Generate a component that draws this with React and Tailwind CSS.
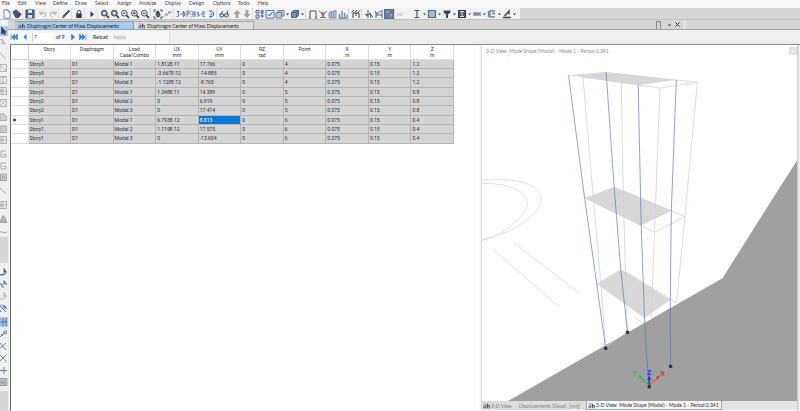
import React from "react";

const ui = "font-['Lato',sans-serif] text-[5px] leading-[8px]";

const glyphs = {
  file: <path d="M2 .8h4l2 2v6.4H2zM6 .8v2h2" fill="#f7fafd" stroke="#7288a8" />,
  paste: <path d="M1 3l3-2 5 4-2 3-3 .8zM3 3l4 4M5 6l3-1" fill="#4d6385" stroke="#2f4262" />,
  save: <g><path d="M1 1h8v8H1z" fill="#4a617f" stroke="#3b4f6d" /><path d="M3 1h4v3H3zM2.8 6h4.4v3H2.8z" fill="#d7e0ec" stroke="none" /></g>,
  undo: <path d="M2 2v3h3M2.2 4.8Q5 1.8 7.5 4.2 8.6 6.6 6 8" stroke="#a5abb5" />,
  redo: <path d="M8 2v3H5M7.8 4.8Q5 1.8 2.5 4.2 1.4 6.6 4 8" stroke="#a5abb5" />,
  pencil: <g><path d="M2.5 7.5L8.5 1.5" stroke="#34496b" strokeWidth="2" /><path d="M1.2 9l.6-2 1.4 1.4z" fill="#1f2c44" /></g>,
  lock: <g><path d="M3.2 5V3.2a1.8 1.8 0 013.6 0V5" stroke="#3d4a60" /><path d="M2.300 4.500h5.400V9H2.300z" fill="#2c3950" stroke="none" /></g>,
  play: <path d="M3.5 2.2L7 5.2 3.5 8.2z" fill="#2c4068" stroke="none" />,
  zoom: <g><circle cx="4.3" cy="4.2" r="2.9" fill="#e9eef5" stroke="#4a566c" /><path d="M6.5 6.4L9 9" stroke="#2f394d" strokeWidth="1.6" /><path d="M3 4.2h2.6" stroke="#2f394d" /></g>,
  zoomBox: <g><circle cx="4.3" cy="4.2" r="2.9" fill="#7d8ba3" stroke="#3f495d" /><path d="M6.5 6.4L9 9" stroke="#2f394d" strokeWidth="1.6" /><path d="M3 3h2.6v2.4H3z" fill="#dbe3ee" stroke="none" /></g>,
  zoomIn: <g><circle cx="4.3" cy="4.2" r="2.9" fill="#e9eef5" stroke="#4a566c" /><path d="M6.5 6.4L9 9" stroke="#2f394d" strokeWidth="1.6" /><path d="M3 4.2h2.6M4.3 2.9v2.6" stroke="#2f394d" /></g>,
  pan: <g><path d="M1 3V1h2M7 1h2v2M9 7v2H7M3 9H1V7" stroke="#44536d" /><path d="M3 5.5V3h1v1-2h1v2-1.6h1V4h1v2.5L6 8H4z" fill="#50617f" stroke="#2d3a52" strokeWidth=".5" /></g>,
  wave: <path d="M1 8L3 4l1 3 2-5 .6 3L9 2" stroke="#9da8ba" />,
  view3: <path d="M1 2.500h2L2 4.500q2 1.500 0 3H.800M4.500 5h1.600M7.200 2.500v5q2.400-.400 1.600-3Q8.400 2.500 7.200 2.500" stroke="#45608c" />,
  plan: <path d="M1 2v6M1 2h2v3H1M4.500 2.500h1M4.500 5h1M4.500 8h1M7 2v6M9 2v6M7 5h2" stroke="#5b749e" />,
  elev: <path d="M3 3Q1 3 1.500 5H3V7H1M4.500 5h1.500M7 2v6M9 3H7.500M9 5H7.500M9 7.500H7.500" stroke="#5b749e" />,
  rotate: <path d="M3 2h2.500Q8 3 7.500 6 6.500 8.500 3.500 8M3.500 8l1.500-1.500M4 5h2" stroke="#36558c" />,
  glasses: <g><circle cx="2.700" cy="6.300" r="1.900" fill="#c5d3e6" stroke="#3f5576" /><circle cx="7.300" cy="6.300" r="1.900" fill="#c5d3e6" stroke="#3f5576" /><path d="M1 5.500L4 2M9 5.500L8 1.500M4.500 6h1" stroke="#3f5576" /></g>,
  up: <path d="M5 1l3.600 4H6.400v4H3.600V5H1.400z" fill="#a4a4a4" stroke="none" />,
  down: <path d="M5 9l3.600-4H6.400V1H3.600v4H1.400z" fill="#a4a4a4" stroke="none" />,
  tree: <path d="M1 1.500h3v2.500H1zM1 6h3v3H1zM5.500 2H9M5.500 4H9M5.500 7h3.500M7 1v8" stroke="#47618b" />,
  check: <g><path d="M1 1.500h8v7.500H1z" fill="#e9f0f8" stroke="#5a7498" /><path d="M2.800 5l1.700 2 3-4" stroke="#34517f" /></g>,
  objects: <g><path d="M1 3.500h5.500V9H1zM3 3.500V1.500h6V7H6.500" fill="#b8c8dd" stroke="#6a82a8" /></g>,
  cube: <path d="M1.500 3.500L3.500 1.500h5V6L6.500 8.500h-5zM1.500 3.500h5v5M6.500 3.500l2-2" fill="#7d91b2" stroke="#4c6186" />,
  frame: <path d="M2 9V2h6v7M.8 9h2.400M6.800 9h2.400" stroke="#48566f" />,
  bent: <g><path d="M1 2l2.500 2L5 8l1.500-4L9 2M2 8.500h6" stroke="#6d7786" /><path d="M3 3.500h4L5 7.500z" fill="#cf5248" stroke="none" /></g>,
  bars: <g><path d="M1 3.500l7-2V9H1z" fill="#b9c8dc" stroke="#7790b4" /><path d="M3.300 3v6M5.700 2.500V9" stroke="#7790b4" /></g>,
  bars2: <path d="M1.500 9V5M4 9V2M6.500 9V4M9 9V5.500M.500 9h9" stroke="#6f87aa" strokeWidth="1.300" />,
  load: <path d="M2 9V4h6v5M.800 3.500l2-2.500M4 3.500l2-2.500M7 3.500l2-2M5 4v3" stroke="#2f3d54" />,
  axial: <path d="M4 1v8M1 5l3 1 2-2 1 5M2 7l5-3M7 6l2 2" stroke="#4d5b72" />,
  moment: <path d="M1 2q2 4 4 1.500T9 2M2 9V3M8 9V3M2 6h6" stroke="#4f6587" />,
  area: <g><path d="M0 0h10v10H0z" fill="#6c7f99" stroke="#4e5f78" /><path d="M2 2h3v2H2zM6 5h2v2.500H6zM2 7h2" fill="#93a4ba" stroke="none" /></g>,
  ibeam: <path d="M2.500 1.500h5M2.500 8.500h5M5 1.500v7" stroke="#4a576d" strokeWidth="1.200" />,
  box: <path d="M1.500 1.500h7v7h-7z" fill="#a6bcd8" stroke="#54688a" strokeWidth="1.200" />,
  tee: <path d="M1.500 1.500h7v2L6 5.500V9H4V5.500L1.500 3.500z" fill="#3c4759" stroke="none" />,
  ibox: <g><path d="M1.500 1.500h7v7h-7z" fill="#4c5a72" stroke="#27334a" /><path d="M3 2.500h4M3 7.500h4M5 2.500v5" stroke="#d7dfea" /></g>,
  deck: <path d="M1 4h8M1 6h8M2 5h6" stroke="#58667d" />,
  channel: <path d="M8 2H3v6h5M1.500 2v6M5 4.500h3" stroke="#6d83a6" strokeWidth="1.300" />,
  draw: <path d="M1 8.500h8M2.500 7L7 2v3.500" stroke="#33435f" strokeWidth="1.400" />,
  cursor: <path d="M3.500 1v7L5.200 6.700 6.400 9l1-.600L6.400 6.300h2z" fill="#31435f" stroke="#1f2c44" strokeWidth=".500" />,
  reshape: <path d="M1 2l4 1 2 5M4 2v5l2-1 1 2" stroke="#b4b4b4" />,
  line: <path d="M2 2l6 6" stroke="#b0b0b0" />,
  boxDiag: <path d="M2 1.500h6.500v7H2zM2 1.500l6.500 7" stroke="#b6b6b6" />,
  column: <path d="M2 1.500h6.500v7H2zM5 2v6M3.500 2.500h3M3.500 7.500h3" stroke="#b6b6b6" />,
  grid2: <path d="M2 1.500h6.500v7H2zM5 1.500v7M2 5h6.500M3.500 3v4" stroke="#b0b0b0" />,
  brace: <path d="M2 1.500h6.500v7H2zM2 1.500l6.500 7M8.500 1.500L2 8.500" stroke="#b6b6b6" />,
  poly: <path d="M2 2h4l2.500 2.500v4H2z" fill="#d3d3d3" stroke="#adadad" />,
  rect: <path d="M2 2h6.500v6.500H2z" fill="#cdcdcd" stroke="#adadad" />,
  wallC: <path d="M8 2H3v6h5V5.500H5.500" stroke="#a8a8a8" />,
  wallO: <path d="M2.500 2h6v6.500h-6zM4.500 4h2v2h-2z" fill="#cfcfcf" stroke="#a6a6a6" />,
  hill: <path d="M2 8.500L4.500 2H6l2.800 6.500z" fill="#b5b5b5" stroke="#a5a5a5" />,
  dash: <path d="M1 5.500q2-1.500 4 0t4-.500" stroke="#a8a8a8" />,
  selA: <path d="M1 8h4l3-2M6 1.500v4l1-1 1.500 1z" fill="#50688f" stroke="#50688f" />,
  selB: <path d="M1 8V5h3v3h2M6 1.500v4l1-1 1.500 1z" fill="none" stroke="#50688f" />,
  selC: <path d="M1 8h4l3-2M6 1.500v4l1-1 1.500 1z" stroke="#b0b0b0" />,
  selD: <path d="M1 2l7 7M3 1.500l2 2M6 2v3.500l1-1 1.500 1zM1 6l2 3" stroke="#50688f" />,
  snapGrid: <path d="M5 1v8M1 5h8M8 1v8M2 2v1M2 7v1" stroke="#4c76a8" />,
  snapEnd: <path d="M1 9l6-6M6 2h2.500v2.500H6zM3 5l2 2" stroke="#74849c" />,
  snapMid: <path d="M2 2l6 7M5 5l3-3M2 7l3-2" stroke="#74849c" />,
  snapX: <path d="M1.500 1.500l7 7M8.500 1.500l-7 7" stroke="#74849c" />,
  snapPerp: <path d="M1 5.500h8M6 2v7" stroke="#74849c" />,
  snapFine: <path d="M0 1.500h9v7H0zM2 4h5M2 6h5" fill="#bcbcbc" stroke="#9c9c9c" />,
  first: <path d="M2 2v6M8.500 2L5.500 5l3 3zM5.500 2L2.800 5l2.700 3z" fill="#2b7fd4" stroke="#2b7fd4" strokeWidth=".600" />,
  prev: <path d="M6.500 2L3.500 5l3 3z" fill="#2b7fd4" stroke="none" />,
  next: <path d="M3.500 2l3 3-3 3z" fill="#2b7fd4" stroke="#2b7fd4" strokeWidth=".500" />,
  last: <path d="M8 2v6M1.500 2l3 3-3 3zM4.500 2l2.700 3-2.700 3z" fill="#2b7fd4" stroke="#2b7fd4" strokeWidth=".600" />,
  app: <g><path d="M1 1h4v3H1z" fill="#e9a9a9" stroke="none" /><path d="M1.500 9V5M4 9V4M6.500 9V2.500M9 9V5M6 5h3" stroke="#33435f" strokeWidth="1.300" /></g>,
};

function Icon({ name, className = "size-[10px]" }) {
  return (
    <svg viewBox="0 0 10 10" className={`${className} shrink-0`} fill="none" strokeWidth="1" aria-hidden="true">
      {glyphs[name]}
    </svg>
  );
}

function Caret() {
  return (
    <svg viewBox="0 0 5 10" className="h-[10px] w-[5px]" aria-hidden="true">
      <path d="M1 4.500h3L2.500 6.300z" fill="#30394a" />
    </svg>
  );
}

function Tool({ name, label, drop }) {
  return (
    <>
      <button type="button" aria-label={label || name} className="flex w-[10px] items-center justify-center">
        <Icon name={name} />
      </button>
      {drop && (
        <button type="button" aria-label={`${name} options`} className="w-[5px]">
          <Caret />
        </button>
      )}
    </>
  );
}

const menus = [
  ["File", "w-[16px]"], ["Edit", "w-[17px]"], ["View", "w-[18px]"], ["Define", "w-[22px]"],
  ["Draw", "w-[20px]"], ["Select", "w-[22px]"], ["Assign", "w-[22px]"], ["Analyze", "w-[26px]"],
  ["Display", "w-[24px]"], ["Design", "w-[24px]"], ["Options", "w-[25px]"], ["Tools", "w-[20px]"], ["Help", "w-[16px]"],
];

const toolGroups = [
  ["file", "paste"], ["save"], ["undo", "redo"], ["pencil"], ["lock"], ["play"],
  ["zoomBox", "zoomBox", "zoom", "zoomIn", "zoom"], ["pan", "wave"],
  ["view3", "plan", "elev", "rotate"], ["glasses"], ["up", "down"],
  ["tree", "check", "objects*", "cube*"], ["frame", "bent", "bars", "bars2"],
  ["load"], ["axial", "moment", "area"],
];

const sections = ["ibeam", "box", "tee", "ibox", "deck", "channel", "draw"];

const columns = [
  ["Story"], ["Diaphragm"], ["Load", "Case/Combo"], ["UX", "mm"], ["UY", "mm"],
  ["RZ", "rad"], ["Point"], ["X", "m"], ["Y", "m"], ["Z", "m"],
];

const rows = [
  ["Story3", "D1", "Modal 1", "1.812E-11", "17.766", "0", "4", "0.075", "0.15", "1.2"],
  ["Story3", "D1", "Modal 2", "-3.667E-12", "-14.885", "0", "4", "0.075", "0.15", "1.2"],
  ["Story3", "D1", "Modal 3", "-1.128E-12", "-8.765", "0", "4", "0.075", "0.15", "1.2"],
  ["Story2", "D1", "Modal 1", "1.348E-11", "14.389", "0", "5", "0.075", "0.15", "0.8"],
  ["Story2", "D1", "Modal 2", "0", "6.919", "0", "5", "0.075", "0.15", "0.8"],
  ["Story2", "D1", "Modal 3", "0", "17.414", "0", "5", "0.075", "0.15", "0.8"],
  ["Story1", "D1", "Modal 1", "6.793E-12", "8.813", "0", "6", "0.075", "0.15", "0.4"],
  ["Story1", "D1", "Modal 2", "1.119E-12", "17.575", "0", "6", "0.075", "0.15", "0.4"],
  ["Story1", "D1", "Modal 3", "0", "-13.604", "0", "6", "0.075", "0.15", "0.4"],
];

function MenuBar() {
  return (
    <nav aria-label="Main menu" className="flex h-[8px] shrink-0 items-start overflow-hidden bg-[#f9f9f9] pl-[2px] leading-[7px] text-[#444]">
      {menus.map(([name, width]) => (
        <button key={name} type="button" className={`${width} shrink-0 text-left`}>{name}</button>
      ))}
    </nav>
  );
}

function Toolbar() {
  return (
    <div className="flex h-[12px] shrink-0 border-b border-[#c0c0c0] bg-[#d6d6d6]">
      <div role="toolbar" aria-label="Standard" className="flex h-full gap-[2px] bg-[#f2f2f2] pl-[2px]">
        {toolGroups.map((group, g) => (
          <div key={g} className="flex border-r border-[#dedede]">
            {group.map((item, i) => (
              <Tool key={i} name={item.replace("*", "")} drop={item.endsWith("*")} />
            ))}
          </div>
        ))}
        <button type="button" disabled className="w-[8px] text-left text-[#b9b9b9]">nd</button>
      </div>
      <div role="toolbar" aria-label="Sections" className="flex h-full bg-[#f2f2f2] pl-[7px] pr-[3px]">
        {sections.map((name) => <Tool key={name} name={name} drop />)}
      </div>
    </div>
  );
}

const sideGroups = [
  { h: "h-[21px]", items: ["cursor!", "reshape"] },
  { h: "h-[57px]", items: ["line", "boxDiag", "column", "grid2", "brace"] },
  { h: "h-[33px]", items: ["poly", "rect", "grid2"] },
  { h: "h-[33px]", items: ["wallC", "wallC", "wallO"] },
  { h: "h-[10px]", items: ["line"] },
  { h: "h-[37px]", items: ["grid2", "hill", "dash"] },
];

const snapGroups = [
  { h: "h-[46px]", items: ["selA", "selB", "selC", "selD"] },
  { h: "h-[70px]", items: ["snapGrid!", "snapEnd", "snapMid", "snapX", "snapPerp", "snapFine"] },
];

function SideGroup({ h, items }) {
  return (
    <div className={`${h} flex flex-col justify-between`}>
      {items.map((item, i) => (
        <button
          key={i}
          type="button"
          aria-label={item.replace("!", "")}
          className={`flex h-[10px] justify-end ${item.endsWith("!") ? "bg-[#a9cdf0]" : ""}`}
        >
          <Icon name={item.replace("!", "")} />
        </button>
      ))}
    </div>
  );
}

function SideBar() {
  return (
    <aside className="w-[8px] shrink-0 overflow-hidden bg-[#d6d6d6]">
      <div className="flex flex-col gap-[4px] bg-[#f0f0f0] pt-[6px]">
        {sideGroups.map((g, i) => <SideGroup key={i} {...g} />)}
      </div>
      <div className="mt-[26px] flex flex-col gap-[4px] bg-[#f0f0f0] py-[4px]">
        {snapGroups.map((g, i) => <SideGroup key={i} {...g} />)}
      </div>
    </aside>
  );
}

function DocumentTabs() {
  const title = "Diaphragm Center of Mass Displacements";
  return (
    <div className="flex h-[10px] shrink-0 items-end border-b border-[#a4a4a4] bg-[#d6d6d6] pl-[7px] text-[#222]">
      <div role="tablist" className="flex">
        <button type="button" role="tab" aria-selected="true" className="flex h-[8px] w-[119px] items-center gap-[2px] border-r border-t border-[#8a9bb0] bg-[#a9cbeb] pl-[3px] text-left whitespace-nowrap">
          <Icon name="app" className="size-[7px]" />{title}
        </button>
        <button type="button" role="tab" aria-selected="false" className="flex h-[8px] w-[120px] items-center gap-[2px] border-r border-t border-[#a9a9a9] bg-[#dedede] pl-[4px] text-left whitespace-nowrap">
          <Icon name="app" className="size-[7px]" />{title}
        </button>
      </div>
      <div className="ml-auto mr-[115px] flex h-[9px] items-center gap-[3px] border-r border-[#f4f4f4] pr-[4px]">
        <span className="mr-[3px] h-[8px] w-[5px] self-end border-x border-t border-[#8d8d8d]" />
        <button type="button" aria-label="Window list" className="w-[5px]"><Caret /></button>
        <button type="button" aria-label="Close tab" className="w-[5px]">
          <svg viewBox="0 0 5 5" className="size-[5px]" aria-hidden="true"><path d="M.500.500l4 4m0-4l-4 4" stroke="#333" /></svg>
        </button>
      </div>
    </div>
  );
}

function RecordBar() {
  return (
    <div className="flex h-[14px] shrink-0 items-center bg-[#efefef] pl-[1px]">
      <form className="flex h-[12px] w-[161px] items-center rounded-[1px] border-r border-[#dadada] bg-[#f6f6f6] text-[#222]" onSubmit={(e) => e.preventDefault()}>
        <button type="button" aria-label="First record"><Icon name="first" /></button>
        <button type="button" aria-label="Previous record" className="ml-px"><Icon name="prev" /></button>
        <input aria-label="Record number" defaultValue="7" className="ml-[2px] h-[9px] w-[22px] border-l border-[#d0d0d0] bg-white pl-[1px]" />
        <span className="ml-[2px] w-[12px]">of 9</span>
        <button type="button" aria-label="Next record"><Icon name="next" /></button>
        <button type="button" aria-label="Last record"><Icon name="last" /></button>
        <button type="submit" className="ml-[5px] w-[20px] text-left">Reload</button>
        <button type="button" className="text-[#a0a0a0]">Apply</button>
      </form>
    </div>
  );
}

function ResultsTable() {
  return (
    <div className="min-w-0 flex-1 overflow-hidden border-l border-[#707070] bg-white">
      <table className="w-[443px] table-fixed border-collapse font-['Roboto',sans-serif] leading-[6px] text-[#333]">
        <colgroup>
          <col className="w-[17px]" />
          {columns.map((c) => <col key={c[0]} />)}
        </colgroup>
        <thead>
          <tr className="h-[14px] align-top">
            <td className="border-b border-r border-[#d0d0d0] p-0" />
            {columns.map(([name, unit]) => (
              <th key={name} scope="col" className="border-b border-r border-[#e0e0e0] p-0 pt-[1px] font-normal">
                {name}<br />{unit}
              </th>
            ))}
          </tr>
        </thead>
        <tbody>
          {rows.map((row, r) => (
            <tr key={r} className="h-[9px] nth-[3n]:h-[10px]">
              <td className="border-b border-r border-[#dcdcdc] p-0 pl-[2px]">
                {r === 6 && (
                  <svg viewBox="0 0 4 4" className="size-[4px]" role="img" aria-label="Current row"><path d="M.500 0L3.500 2 .500 4z" fill="#222" /></svg>
                )}
              </td>
              {row.map((value, c) => (
                <td
                  key={c}
                  className={`border-b border-r border-[#b4b4b4] p-0 pl-[1px] ${r === 6 && c === 4 ? "bg-[#0a78d7] text-white" : "bg-[#d4d4d4]"}`}
                >
                  {value}
                </td>
              ))}
            </tr>
          ))}
        </tbody>
      </table>
    </div>
  );
}

const supports = [[605.3, 348.3], [627, 332.3], [670, 366.3], [648.7, 386.7]];

function ModeShape() {
  return (
    <svg viewBox="482 57 314 344" preserveAspectRatio="none" className="min-h-0 w-full flex-1" fill="none" role="img" aria-label="Deformed mode shape">
      <path d="M507.700 401L721.700 278.300 758.300 220 797 159V401z" fill="#a0a0a0" />
      <g stroke="#dadada" strokeWidth=".800">
        <path d="M482 180C502 178 523 180 533 187 544 194 544 205 530 217 514 231 500 235 482 240.700" />
        <path d="M482 183.300C500 183 515 187 523 194 531 202 528 211 511.700 225 503 233 496 236 482 240" />
        <path d="M513.300 242.300L579.700 294M493.700 250L558.700 306.700" />
      </g>
      <g fill="#d8d8d8">
        <path d="M568.300 75.300L605.700 72 675.700 80 637.700 85z" />
        <path d="M584.300 198.300L613.700 186.700 671.300 210.700 640.500 225.500z" />
        <path d="M596.300 283.700L620.300 269.300 669.700 299.700 644 318.300z" />
      </g>
      <g stroke="#d2d2d2" strokeWidth=".800">
        <path d="M582.700 77L620.700 74.300 696.700 82.300 659.300 88z" />
        <path d="M593.300 202L622.700 191 684.300 216.700 654 232.300z" />
        <path d="M600.700 286L625 271.700 676 302.700" />
        <path d="M582.700 77L593.300 202 600.700 286 605.300 348.300M620.700 74.300L622.700 191 625 271.700 627 332.300M696.700 82.300L684.300 216.700 676 302.700M659.300 88L654 232.300 650.500 318M599 342l6 5 22-15M634 317l10 7" />
      </g>
      <g stroke="#5a74b4" strokeOpacity=".750" strokeWidth=".900">
        <path d="M568.300 75.300L584.300 198.300 596.300 283.700Q600 310 605.300 348.300" />
        <path d="M605.700 72L613.700 186.700 620.300 269.300 627 332.300" />
        <path d="M675.700 80L670.700 210.700 669.700 299.700 670 366.300" />
        <path d="M637.700 85L640.700 225.500 644 318.300Q645.500 355 648.700 386.700" />
      </g>
      {supports.map(([x, y]) => (
        <g key={x} stroke="#22242c" strokeWidth=".700">
          <path d={`M${x - 1.2} ${y - 1.2}h2.400v2.400h-2.400zl2.400 2.400m0-2.400l-2.400 2.400`} fill="#4a4c55" />
        </g>
      ))}
      <path d="M648.700 385L640 377.500" stroke="#2bc42b" /><path d="M637.500 375l4 1.200-2 2.600z" fill="#2bc42b" />
      <path d="M648.700 385V377" stroke="#2a35e8" strokeWidth="1.500" /><path d="M646.700 380l2-5 2 5z" fill="#2a35e8" />
      <path d="M648.700 385L657 378" stroke="#e02c22" strokeDasharray="2 1" /><path d="M659.500 375.500l-4 1.200 2 2.600z" fill="#e02c22" />
      <g className="font-['Liberation_Sans',sans-serif] text-[7px] font-bold" textAnchor="middle">
        <text x="634" y="376" fill="#2bc42b">Y</text>
        <text x="648.700" y="375" fill="#2a35e8">Z</text>
        <text x="662" y="376" fill="#e02c22">X</text>
      </g>
    </svg>
  );
}

function Viewer() {
  return (
    <section aria-label="3-D View" className="mr-[2px] flex w-2/5 shrink-0 flex-col border-r border-[#cfcfcf] bg-white shadow-[0_0_3px_#aaa]">
      <header className="flex h-[12px] shrink-0 items-center justify-between pl-[4px] text-[#8c8c8c]">
        <h1 className="whitespace-pre">3-D View  Mode Shape (Modal) - Mode 1 - Period 0.341</h1>
        <button type="button" aria-label="Close view" className="flex size-[8px] items-center justify-center bg-[#e2e2e2]">
          <svg viewBox="0 0 5 5" className="size-[4px]" aria-hidden="true"><path d="M.500.500l4 4m0-4l-4 4" stroke="#f6f6f6" /></svg>
        </button>
      </header>
      <ModeShape />
      <div role="tablist" className="mb-px flex h-[9px] shrink-0 bg-[#e4e4e4] whitespace-pre">
        <button type="button" role="tab" aria-selected="false" className="flex w-[104px] items-center gap-[1px] bg-[#dcdcdc] pl-[1px] text-[#858585]">
          <Icon name="app" className="size-[7px]" />3-D View   - Displacements (Dead)  [mm]
        </button>
        <button type="button" role="tab" aria-selected="true" className="flex w-[136px] items-center gap-[1px] border-x border-b border-[#a8a8a8] bg-[#f5f5f5] pl-[1px] text-[#333]">
          <Icon name="app" className="size-[7px]" />3-D View  Mode Shape (Modal) - Mode 1 - Period 0.341
        </button>
      </div>
    </section>
  );
}

export default function App() {
  return (
    <div className={`${ui} flex h-screen flex-col overflow-hidden bg-[#efefef]`}>
      <MenuBar />
      <Toolbar />
      <div className="flex min-h-0 flex-1">
        <SideBar />
        <div className="flex min-w-0 flex-1 flex-col">
          <DocumentTabs />
          <RecordBar />
          <main className="ml-[2px] flex min-h-0 flex-1 border-t border-[#868686] bg-white">
            <ResultsTable />
            <Viewer />
          </main>
        </div>
      </div>
    </div>
  );
}
